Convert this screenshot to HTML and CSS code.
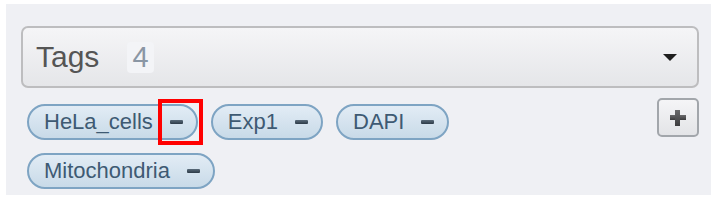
FILE: index.html
```html
<!DOCTYPE html>
<html lang="en">
<head>
<meta charset="utf-8">
<title>Tags</title>
<link rel="stylesheet" href="styles.css">
</head>
<body>
<div class="panel">
  <div class="select">
    <span class="select-label">Tags</span>
    <span class="count">4</span>
    <span class="caret"></span>
  </div>
  <div class="tags-row">
    <ul class="tags">
      <li class="tag"><span class="tag-name">HeLa_cells</span><span class="remove"></span></li>
      <li class="tag"><span class="tag-name">Exp1</span><span class="remove"></span></li>
      <li class="tag"><span class="tag-name">DAPI</span><span class="remove"></span></li>
      <li class="tag"><span class="tag-name">Mitochondria</span><span class="remove"></span></li>
    </ul>
    <button class="add" type="button" aria-label="Add tag"><span class="plus"></span></button>
  </div>
</div>
<div class="highlight"></div>
</body>
</html>
```

FILE: styles.css
```css
html, body {
  margin: 0;
  padding: 0;
  background: #ffffff;
  font-family: "Liberation Sans", Arial, sans-serif;
}

body {
  position: relative;
}

.panel {
  margin: 4px 5px 0 6px;
  height: 191px;
  box-sizing: border-box;
  background: #eff0f4;
  padding: 22px 12px 6px 15px;
}

.select {
  height: 62px;
  box-sizing: border-box;
  border: 2px solid #bdbdbf;
  border-radius: 7px;
  background: linear-gradient(#f5f5f7, #e5e6e9);
  display: flex;
  align-items: center;
  padding: 0 20px 0 13px;
}

.select-label {
  font-size: 30px;
  color: #555555;
  line-height: 1;
}

.count {
  margin-left: 28px;
  background: #f3f4f7;
  border-radius: 4px;
  color: #8a96a4;
  font-size: 29px;
  line-height: 31px;
  height: 31px;
  padding: 0 5px;
}

.caret {
  margin-left: auto;
  width: 0;
  height: 0;
  border-left: 7px solid transparent;
  border-right: 7px solid transparent;
  border-top: 7px solid #1e1e1e;
}

.tags-row {
  display: flex;
  align-items: flex-start;
  margin-top: 10px;
}

.tags {
  list-style: none;
  margin: 0;
  padding: 6px 0 0 6px;
  display: flex;
  flex-wrap: wrap;
  gap: 13px 13px;
  flex: 0 0 440px;
}

.tag {
  height: 36px;
  box-sizing: border-box;
  border: 2px solid #7ea4c3;
  border-radius: 18px;
  background: linear-gradient(#e2ecf5, #c8dae8);
  display: flex;
  align-items: center;
  padding: 0 13px 0 15px;
  color: #3e5a73;
  font-size: 22px;
}

.tag-name {
  line-height: 1;
}

.remove {
  margin-left: 17px;
  width: 13px;
  height: 4px;
  border-radius: 1px;
  background: linear-gradient(#5a6b7a, #2c3a47);
}

.add {
  margin-left: auto;
  width: 42px;
  height: 39px;
  box-sizing: border-box;
  border: 2px solid #a2a6ab;
  border-radius: 5px;
  background: linear-gradient(#f5f5f7, #e3e4e7);
  padding: 0;
  display: flex;
  align-items: center;
  justify-content: center;
}

.plus {
  position: relative;
  width: 16px;
  height: 16px;
}

.plus::before,
.plus::after {
  content: "";
  position: absolute;
  background: linear-gradient(#6a6a6c, #3c3c3e);
}

.plus::before {
  left: 0;
  top: 5px;
  width: 16px;
  height: 5px;
}

.plus::after {
  left: 5px;
  top: 0;
  width: 5px;
  height: 16px;
}

.highlight {
  position: absolute;
  left: 158px;
  top: 99px;
  width: 45px;
  height: 46px;
  box-sizing: border-box;
  border: 4px solid #ff0000;
  pointer-events: none;
}
```
